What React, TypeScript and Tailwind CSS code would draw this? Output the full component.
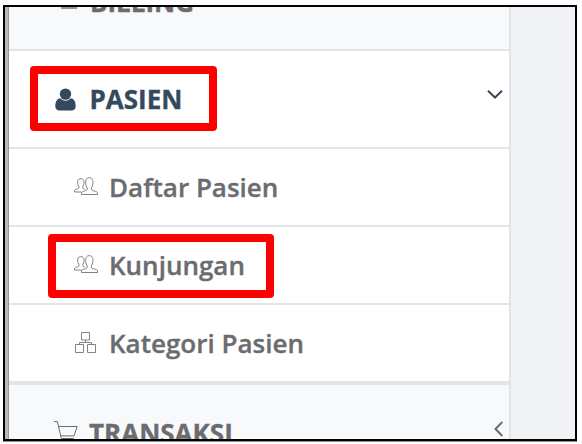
import type { ReactNode } from 'react';
import clsx from 'clsx';

function UserIcon() {
    return (
        <svg className="h-[23px] w-[21px]" viewBox="0 0 21 23" fill="currentColor">
            <circle cx="10.5" cy="6.1" r="5.7" />
            <path d="M5.2 10.2C2 10.6.3 13.7.3 18.2c0 2.6 1.6 4.3 4 4.3h12.4c2.4 0 4-1.7 4-4.3 0-4.5-1.7-7.6-4.9-8-1.4 1.6-3.2 2.5-5.3 2.5s-3.8-.9-5.3-2.5z" />
        </svg>
    );
}

function UsersIcon() {
    return (
        <svg className="h-5 w-6" viewBox="0 0 24 20" fill="none" stroke="currentColor" strokeWidth="0.85">
            <path d="M7.5 17.5v-1.8c.3-.9 1.4-1.300 3-1.700 1.700-.4 2.700-.8 2.700-1.500v-1.800c-.9-1-1.300-2.300-1.400-3.600C11.200 3.300 12.400.6 15.300.6s4.100 2.700 3.500 6.500c-.1 1.300-.5 2.600-1.400 3.600v1.800c0 .7 1 1.100 2.700 1.500 1.700.4 3.100.8 3.400 1.700v1.800z" />
            <path d="M7.400 15H.5v-1.500c.3-.8 1.200-1.100 2.400-1.500 1.300-.4 2-.7 2-1.300V9.300c-.8-.8-1.100-1.900-1.200-3C3.200 3.600 4.300 1.600 6.800 1.600S10.500 3.600 10 6.300c-.1 1.100-.4 2.200-1.200 3v1.500c0 .7.700 1 2 1.400" />
        </svg>
    );
}

function SitemapIcon() {
    return (
        <svg className="h-[22px] w-[22px]" viewBox="0 0 22 22" fill="none" stroke="currentColor" strokeWidth="0.85">
            <path d="M6.500.5h8v7.500h-8zM.5 12.500h8v8h-8zM12.500 12.500h8v8h-8zM10.500 8v2.500M4.500 12.500v-2h12v2" />
        </svg>
    );
}

function CartIcon() {
    return (
        <svg className="h-6 w-6" viewBox="0 0 24 24" fill="none" stroke="currentColor" strokeWidth="1">
            <path d="M0 .6h3.400l4 16.900h12.400M4.600 5.500h18.600l-3.200 9.400H6.800" />
            <circle cx="9.500" cy="19.800" r="1.700" />
            <circle cx="17.500" cy="19.800" r="1.700" />
        </svg>
    );
}

function ChevronDown() {
    return (
        <svg className="h-[9px] w-4" viewBox="0 0 16 9" fill="none" stroke="currentColor" strokeWidth="2">
            <path d="M1 .8l7 6.700 7-6.700" />
        </svg>
    );
}

function ChevronLeft() {
    return (
        <svg className="h-4 w-[9px]" viewBox="0 0 9 16" fill="none" stroke="currentColor" strokeWidth="2">
            <path d="M8.300 1L1.500 8l6.800 7" />
        </svg>
    );
}

type RowProps = {
    icon: ReactNode;
    label: string;
    arrow?: ReactNode;
    className?: string;
    labelClassName?: string;
    children?: ReactNode;
};

function Row({ icon, label, arrow, className, labelClassName, children }: RowProps) {
    return (
        <li className={clsx('relative flex shrink-0 items-center border-[#e3e4e6]', className)}>
            <span className="flex w-[35px] shrink-0">{icon}</span>
            <span
                className={clsx(
                    'flex-1 whitespace-nowrap text-[26px] leading-9 [-webkit-text-stroke:0.35px_currentColor]',
                    labelClassName
                )}
            >
                {label}
            </span>
            {arrow}
            {children}
        </li>
    );
}

export default function App() {
    return (
        <div className="h-[444px] w-[582px] overflow-hidden bg-white pl-[3px] pt-[5px] font-['Open_Sans',sans-serif] text-[#6b6c70]">
            <div className="flex h-[436px] w-[574px] overflow-hidden border-2 border-black bg-[#f1f2f6] shadow-[0_1px_0_#8c8c8c]">
                <div className="w-1 shrink-0 border-r border-[#979797] bg-[#bab9b7]" />
                <ul className="flex w-[502px] shrink-0 flex-col overflow-hidden border-r-2 border-[#e3e4e6] bg-white">
                    <Row
                        className="h-11 items-start border-b-2 bg-[#f8f9fb] pl-[52px]"
                        labelClassName="-mt-[23px] -ml-[6px] font-bold"
                        icon={<span className="h-[2px] w-4 bg-[#929397]" />}
                        label="BILLING"
                    />
                    {/* active group */}
                    <Row
                        className="h-[98px] border-b-2 pl-[46px] pr-[6px] text-[#34495e]"
                        labelClassName="-ml-[0.5px] font-bold"
                        icon={<UserIcon />}
                        label="PASIEN"
                        arrow={<span className="mb-[10px]"><ChevronDown /></span>}
                    >
                        <span className="absolute left-[21px] top-[15px] h-[65px] w-[187px] rounded-[4px] border-8 border-[#fe0000]" />
                    </Row>
                    <Row
                        className="h-[78px] border-b-2 pl-[65px]"
                        labelClassName="font-semibold"
                        icon={<UsersIcon />}
                        label="Daftar Pasien"
                    />
                    <Row
                        className="h-[78px] border-b-2 pl-[65px]"
                        labelClassName="font-semibold"
                        icon={<UsersIcon />}
                        label="Kunjungan"
                    >
                        <span className="absolute left-[39px] top-[7px] h-[64px] w-[226px] rounded-[4px] border-8 border-[#fe0000]" />
                    </Row>
                    <Row
                        className="h-[80px] border-b-4 pl-[66px]"
                        labelClassName="-ml-px font-semibold"
                        icon={<SitemapIcon />}
                        label="Kategori Pasien"
                    />
                    <Row
                        className="h-[96px] bg-[#f8f9fb] pl-[45px] pr-[6px]"
                        labelClassName="font-bold"
                        icon={<CartIcon />}
                        label="TRANSAKSI"
                        arrow={<span className="mb-2"><ChevronLeft /></span>}
                    />
                </ul>
            </div>
        </div>
    );
}
